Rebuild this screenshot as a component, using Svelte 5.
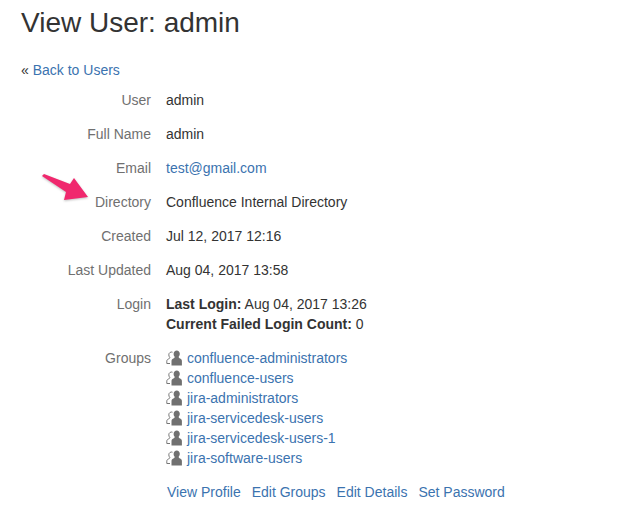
<script>
  const groups = ['confluence-administrators','confluence-users','jira-administrators','jira-servicedesk-users','jira-servicedesk-users-1','jira-software-users'];
  const actions = ['View Profile','Edit Groups','Edit Details','Set Password'];
</script>

<main class="page">
  <h1>View User: admin</h1>
  <p class="back"><span class="laquo">«</span> <a href="#b">Back to Users</a></p>
  <dl class="details">
    <dt>User</dt><dd>admin</dd>
    <dt>Full Name</dt><dd>admin</dd>
    <dt>Email</dt><dd><a href="#e">test@gmail.com</a></dd>
    <dt>
      <svg class="arrow" width="54" height="36" viewBox="0 0 54 36" aria-hidden="true">
        <path class="fill" d="M1 4 L3 2 L29 12 L33 6 L47 25 L23 28 L25 20 Z"/>
      </svg>
      Directory</dt><dd>Confluence Internal Directory</dd>
    <dt>Created</dt><dd>Jul 12, 2017 12:16</dd>
    <dt>Last Updated</dt><dd>Aug 04, 2017 13:58</dd>
    <dt>Login</dt>
    <dd class="login">
      <div><b>Last Login:</b> Aug 04, 2017 13:26</div>
      <div><b>Current Failed Login Count:</b> 0</div>
    </dd>
    <dt>Groups</dt>
    <dd class="groups">
      {#each groups as g}
        <div class="group">
          <svg width="16" height="16" viewBox="0 0 16 16" aria-hidden="true">
            <path class="back-user" d="M6.500 2.200C5 1.600 2.800 2.500 2.800 4.800c0 1.100.4 2 1 2.600 0 .9-.5 1.200-1.200 1.500C1.500 9.400.8 10 .8 11.200v2.300h3.200"/>
            <path class="front-user" d="M10.800 .6c1.700 0 3 1.400 3 3.200 0 1.200-.5 2.200-1.100 2.900 0 1 .5 1.300 1.400 1.700 1.200.5 1.800 1.300 1.800 2.700V15.500H5.500v-4.300c0-1.400.6-2.200 1.800-2.700 .9-.4 1.400-.7 1.400-1.700-.6-.7-1.100-1.700-1.100-2.900C7.600 2 9 .6 10.800 .6z"/>
          </svg>
          <a href="#g">{g}</a>
        </div>
      {/each}
    </dd>
    <dt class="empty"></dt>
    <dd class="actions">
      {#each actions as a}<a href="#a">{a}</a>{/each}
    </dd>
  </dl>
</main>

<style>
  :global(body) { margin: 0; background: #fff; }
  .page {
    font-family: "Liberation Sans", Arial, sans-serif;
    font-size: 14px;
    line-height: 20px;
    color: #333;
    padding: 0 21px;
    height: 509px;
    box-sizing: border-box;
    overflow: hidden;
  }
  h1 {
    margin: 0;
    padding-top: 6px;
    font-size: 28px;
    line-height: 34px;
    font-weight: 400;
    color: #333;
  }
  .back { margin: 20px 0 0; }
  .laquo { color: #333; }
  a { color: #3b73af; text-decoration: none; }
  .details {
    margin: 10px 0 0;
    display: grid;
    grid-template-columns: 130px 1fr;
    column-gap: 15px;
    row-gap: 14px;
  }
  dt { text-align: right; color: #707070; position: relative; }
  dd { margin: 0; color: #333; }
  .arrow { position: absolute; left: 20px; top: -20px; filter: drop-shadow(0 1px 1px rgba(0, 0, 0, .25)); }
  .arrow .fill { fill: #f0286e; }
  .group { display: flex; align-items: center; gap: 5px; height: 20px; }
  .group svg { flex: none; }
  .back-user { fill: none; stroke: #777; stroke-width: 1; }
  .front-user { fill: #707070; }
  .actions { display: flex; gap: 11px; padding-left: 1px; }
</style>
